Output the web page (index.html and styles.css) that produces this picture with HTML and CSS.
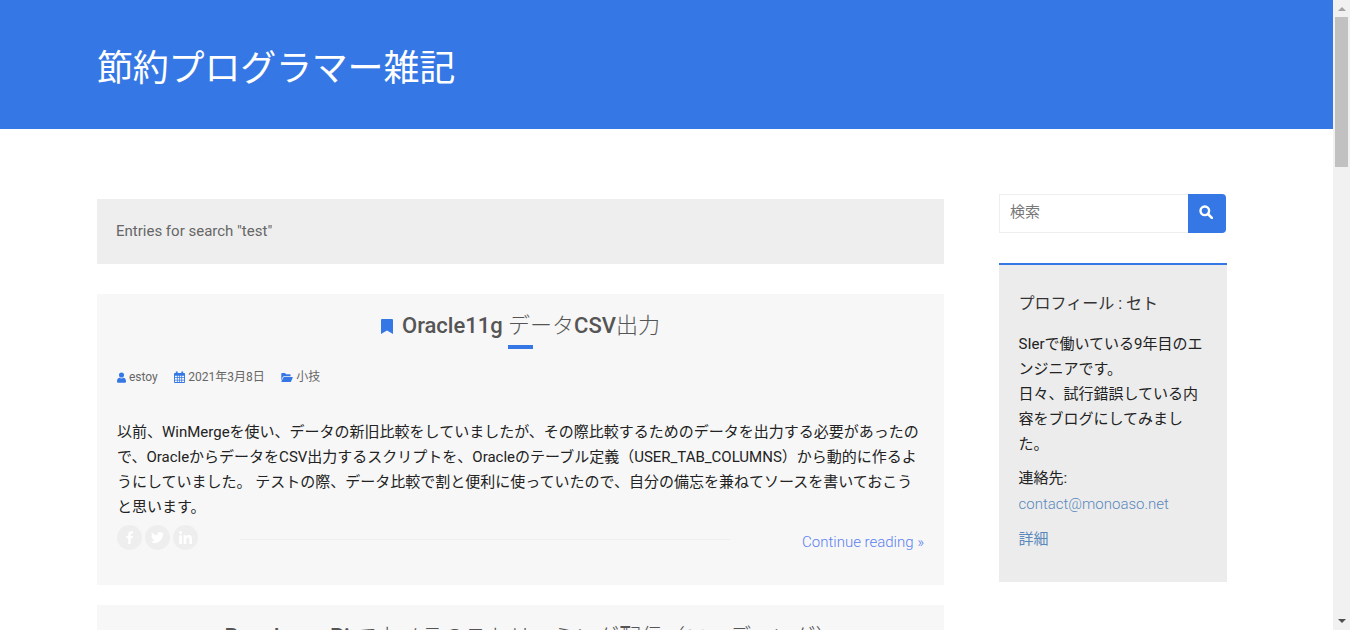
FILE: index.html
```html
<!DOCTYPE html>
<html lang="ja">
<head>
    <meta charset="UTF-8">
    <meta name="viewport" content="width=device-width, initial-scale=1.0">
    <title>節約プログラマー雑記</title>
    <link rel="stylesheet" href="styles.css">
</head>
<body>
    <div class="window">
        <div class="page">
            <header class="site-header">
                <h1 class="site-title">節約プログラマー雑記</h1>
            </header>

            <div class="content">
                <main class="main">
                    <div class="search-note">Entries for search "test"</div>

                    <article class="post">
                        <h2 class="post-title">
                            <svg class="icon-bookmark" viewBox="0 0 12 15"><path d="M0 1.2C0 .5.5 0 1.2 0h9.6c.7 0 1.2.5 1.2 1.2V15L6 11.4 0 15z"/></svg>
                            <span><b>Oracle11g</b> データ<b>CSV</b>出力</span>
                        </h2>
                        <div class="title-bar"></div>
                        <div class="post-meta">
                            <span class="meta-item">
                                <svg class="meta-icon" viewBox="0 0 12 14"><circle cx="6" cy="3.6" r="3.4"/><path d="M0 12.2C0 9 1.6 7.4 3.4 7.4c.8.5 1.6.8 2.6.8s1.800-.3 2.600-.8C10.400 7.400 12 9 12 12.200c0 1-.7 1.800-1.700 1.800H1.700C.7 14 0 13.200 0 12.200z"/></svg>
                                estoy
                            </span>
                            <span class="meta-item">
                                <svg class="meta-icon meta-icon-cal" viewBox="0 0 12 13"><path fill-rule="evenodd" d="M1 2h1V.5h2V2h4V.5h2V2h1c.6 0 1 .4 1 1v9c0 .6-.4 1-1 1H1c-.6 0-1-.4-1-1V3c0-.6.4-1 1-1zm0 3v1.800h2.200V5zm3 0v1.800h1.600V5zm2.400 0v1.800H8V5zm2.400 0v1.800H11V5zM1 7.600v1.800h2.200V7.600zm3 0v1.800h1.600V7.600zm2.400 0v1.800H8V7.600zm2.400 0v1.800H11V7.600zM1 10.200V12h2.200v-1.800zm3 0V12h1.600v-1.800zm2.400 0V12H8v-1.800zm2.400 0V12H11v-1.800z"/></svg>
                                2021年3月8日
                            </span>
                            <span class="meta-item">
                                <svg class="meta-icon meta-icon-wide" viewBox="0 0 14 11"><path d="M0 9.500V1.200C0 .5.500 0 1.200 0h3.300l1.500 1.500h4.200c.7 0 1.200.5 1.200 1.200V4H3.500C2.700 4 2 4.400 1.600 5.100z"/><path d="M3.500 5H13.300c.5 0 .8.500.6 1l-2 4.300c-.2.400-.6.700-1.100.7H.8c-.5 0-.8-.5-.6-1l2.200-4.300C2.600 5.300 3 5 3.500 5z"/></svg>
                                小技
                            </span>
                        </div>
                        <p class="post-text">以前、WinMergeを使い、データの新旧比較をしていましたが、その際比較するためのデータを出力する必要があったので、OracleからデータをCSV出力するスクリプトを、Oracleのテーブル定義（USER_TAB_COLUMNS）から動的に作るようにしていました。 テストの際、データ比較で割と便利に使っていたので、自分の備忘を兼ねてソースを書いておこうと思います。</p>
                        <div class="post-footer">
                            <div class="share">
                                <a class="share-btn">
                                    <svg viewBox="0 0 10 18"><path d="M6.500 18V10h2.700l.5-3.200H6.500V4.900c0-.9.3-1.500 1.600-1.500h1.700V.5C9.500.4 8.500.3 7.400.3 5 .3 3.300 1.800 3.300 4.500v2.300H.5V10h2.800v8z"/></svg>
                                </a>
                                <a class="share-btn">
                                    <svg viewBox="0 0 24 20"><path d="M24 2.400c-.9.400-1.800.7-2.800.8 1-.6 1.800-1.600 2.200-2.700-1 .6-2 1-3.100 1.200C19.300.7 18 0 16.600 0c-2.700 0-4.900 2.200-4.900 4.900 0 .4 0 .8.100 1.100C7.700 5.800 4.100 3.900 1.700.9 1.200 1.600 1 2.500 1 3.400c0 1.700.9 3.200 2.200 4.100-.8 0-1.600-.2-2.200-.6v.1c0 2.400 1.700 4.400 3.900 4.800-.4.100-.8.200-1.300.2-.3 0-.6 0-.9-.1.600 2 2.400 3.400 4.600 3.400-1.700 1.300-3.800 2.100-6.100 2.100-.4 0-.8 0-1.200-.1C2.200 19.300 4.800 20 7.500 20c9.100 0 14-7.500 14-14v-.6c1-.7 1.800-1.600 2.500-3z"/></svg>
                                </a>
                                <a class="share-btn">
                                    <svg viewBox="0 0 18 18"><path d="M.3 6h3.700v12H.3zM2.200 0c1.200 0 2.100.9 2.100 2.100S3.400 4.300 2.200 4.300 0 3.300 0 2.100 1 0 2.200 0zM6.400 6H10v1.600c.5-1 1.700-2 3.500-2 3.800 0 4.500 2.500 4.500 5.700V18h-3.700v-5.800c0-1.400 0-3.200-2-3.200s-2.200 1.500-2.200 3.100V18H6.400z"/></svg>
                                </a>
                            </div>
                            <div class="footer-rule"></div>
                            <a class="read-more">Continue reading »</a>
                        </div>
                    </article>

                    <article class="post">
                        <h2 class="post-title">
                            <svg class="icon-bookmark" viewBox="0 0 12 15"><path d="M0 1.2C0 .5.5 0 1.2 0h9.6c.7 0 1.2.5 1.2 1.2V15L6 11.4 0 15z"/></svg>
                            <span><b>Raspberry Pi</b> でカメラのストリーミング配信（コーディング）</span>
                        </h2>
                    </article>
                </main>

                <aside class="sidebar">
                    <form class="search-form">
                        <input class="search-input" type="text" placeholder="検索">
                        <button class="search-btn" type="button">
                            <svg viewBox="0 0 14 14"><circle cx="5.800" cy="5.800" r="4.300" fill="none" stroke="#fff" stroke-width="2.400"/><path d="M9 9l3.800 3.800" stroke="#fff" stroke-width="2.600" stroke-linecap="round"/></svg>
                        </button>
                    </form>

                    <section class="widget">
                        <h3 class="widget-title">プロフィール : セト</h3>
                        <p>SIerで働いている9年目のエンジニアです。<br>日々、試行錯誤している内容をブログにしてみました。</p>
                        <p>連絡先:<br><a class="contact-link">contact@monoaso.net</a></p>
                        <p><a>詳細</a></p>
                    </section>
                </aside>
            </div>
        </div>

        <div class="scrollbar">
            <div class="scroll-arrow scroll-up"></div>
            <div class="scroll-thumb"></div>
            <div class="scroll-space"></div>
            <div class="scroll-arrow scroll-down"></div>
        </div>
    </div>
</body>
</html>
```

FILE: styles.css
```css
html, body {
    margin: 0;
    padding: 0;
    height: 100%;
    overflow: hidden;
}

body {
    font-family: Roboto, "Noto Sans CJK JP", sans-serif;
    font-size: 15px;
    color: #222;
    background-color: #fff;
}

.window {
    display: flex;
    height: 630px;
}

.page {
    flex: 1;
    min-width: 0;
    overflow: hidden;
}

.site-header {
    height: 129px;
    background-color: #3578e5;
    padding-left: 97px;
    box-sizing: border-box;
}

.site-title {
    margin: 0;
    padding-top: 44px;
    font-size: 36px;
    line-height: 50px;
    font-weight: 400;
    letter-spacing: -0.2px;
    color: #fff;
}

.content {
    display: flex;
    align-items: flex-start;
    padding: 65px 0 0 97px;
}

.main {
    width: 847px;
    padding-top: 5px;
}

.search-note {
    height: 65px;
    line-height: 64px;
    padding-left: 19px;
    background-color: #eee;
    color: #666;
    margin-bottom: 30px;
}

.post {
    background-color: #f7f7f7;
    padding: 0 20px;
    margin-bottom: 20px;
    height: 291px;
    box-sizing: border-box;
}

.post-title {
    display: flex;
    justify-content: center;
    align-items: center;
    margin: 0;
    padding-top: 17px;
    font-size: 22px;
    line-height: 30px;
    font-weight: 300;
    color: #555;
}

.post-title b {
    font-weight: 500;
}

.icon-bookmark {
    width: 12px;
    height: 15px;
    margin-right: 9px;
    fill: #3578e5;
}

.title-bar {
    width: 25px;
    height: 4px;
    margin: 4px auto 0;
    background-color: #3578e5;
}

.post-meta {
    display: flex;
    gap: 16.5px;
    margin-top: 19px;
    font-size: 12px;
    line-height: 18px;
    color: #666;
}

.meta-item {
    display: flex;
    align-items: center;
    gap: 3px;
}

.meta-icon {
    width: 9px;
    height: 11px;
    fill: #3578e5;
}

.meta-icon-cal {
    width: 11px;
    height: 12px;
}

.meta-icon-wide {
    width: 12px;
    height: 9px;
}

.post-text {
    margin: 34px 0 0;
    line-height: 25px;
    color: #222;
}

.post-footer {
    display: flex;
    align-items: flex-start;
    margin-top: 5px;
}

.share {
    display: flex;
    gap: 3px;
}

.share-btn {
    display: flex;
    align-items: center;
    justify-content: center;
    width: 25px;
    height: 25px;
    border-radius: 50%;
    background-color: #eee;
}

.share-btn svg {
    width: 13px;
    height: 13px;
    fill: #fff;
}

.footer-rule {
    width: 490px;
    height: 1px;
    margin-left: 42px;
    margin-top: 14px;
    background-color: #eee;
}

.read-more {
    margin-left: auto;
    margin-top: 8px;
    color: #5b7ff0;
    font-weight: 300;
}

.sidebar {
    width: 228px;
    margin-left: 55px;
}

.search-form {
    display: flex;
    height: 39px;
}

.search-input {
    width: 189px;
    box-sizing: border-box;
    border: 1px solid #eee;
    border-right: none;
    padding: 0 10px 3px;
    font-family: inherit;
    font-size: 15px;
    color: #666;
    outline: none;
    background-color: #fff;
}

.search-input::placeholder {
    color: #777;
}

.search-btn {
    display: flex;
    align-items: center;
    justify-content: center;
    width: 38px;
    padding: 0 2px 3px 0;
    border: none;
    border-radius: 0 4px 4px 0;
    background-color: #3578e5;
}

.search-btn svg {
    width: 14px;
    height: 14px;
}

.widget {
    margin-top: 30px;
    padding: 27px 20px 0 19.5px;
    border-top: 2px solid #3578e5;
    background-color: #ececec;
    line-height: 25px;
    height: 319px;
    box-sizing: border-box;
}

.widget-title {
    margin: 0 0 16px;
    font-size: 16px;
    line-height: 24px;
    font-weight: 400;
    color: #333;
}

.widget p {
    margin: 0 0 9px;
}

.widget a {
    color: #5a88bd;
}

.contact-link {
    display: inline-block;
    margin: 1px 0;
    font-weight: 300;
}

.scrollbar {
    display: flex;
    flex-direction: column;
    width: 17px;
    background-color: #f1f1f1;
}

.scroll-arrow {
    height: 17px;
    position: relative;
}

.scroll-up::after,
.scroll-down::after {
    content: "";
    position: absolute;
    left: 5px;
    border-left: 4px solid transparent;
    border-right: 4px solid transparent;
}

.scroll-up::after {
    top: 7px;
    border-bottom: 4px solid #a3a3a3;
}

.scroll-down::after {
    top: 6px;
    border-top: 4px solid #505050;
}

.scroll-thumb {
    height: 150px;
    margin: 0 2px;
    background-color: #c1c1c1;
}

.scroll-space {
    flex: 1;
}
```
